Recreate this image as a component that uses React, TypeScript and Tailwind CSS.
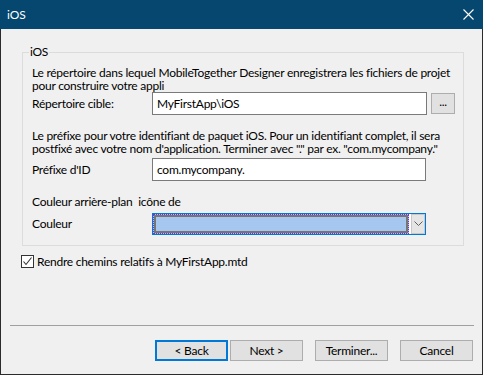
import React from "react";

const font = { fontFamily: 'Lato, "Noto Sans", "Liberation Sans", sans-serif', letterSpacing: "-0.25px" };

function Btn({ children, primary, className = "" }: { children: React.ReactNode; primary?: boolean; className?: string }) {
  return (
    <div
      className={
        "w-[73px] h-[21px] flex items-center justify-center text-[12px] text-black bg-[#e1e1e1] " +
        (primary ? "border-2 border-[#0078d7] " : "border border-[#adadad] ") +
        className
      }
    >
      {children}
    </div>
  );
}

export default function App() {
  return (
    <div className="w-[483px] h-[375px] bg-[#f0f0f0] border-x border-b border-[#2b2b2b] flex flex-col text-black whitespace-nowrap" style={font}>
      <div className="h-[29px] bg-[#05476f] flex items-center justify-between pl-[7px] pr-[8px] shrink-0 -mx-px">
        <span className="text-white text-[12px] tracking-normal">iOS</span>
        <svg width="11" height="11" viewBox="0 0 11 11" className="mr-[1px]">
          <path d="M0.5 0.5 L10.5 10.5 M10.5 0.5 L0.5 10.5" stroke="#ffffff" strokeWidth="1.1" />
        </svg>
      </div>
      <div className="relative ml-[21px] mt-[23px] w-[442px] h-[194px] border border-[#dcdcdc] shrink-0">
        <span className="absolute -top-[9px] left-[6px] px-px bg-[#f0f0f0] text-[12px] leading-[15px]">iOS</span>
        <div className="pl-[9px] pt-[13px] text-[12px]">
          <div className="leading-[13px]">
            Le répertoire dans lequel MobileTogether Designer enregistrera les fichiers de projet
            <br />
            pour construire votre appli
          </div>
          <div className="flex items-center h-[23px] mt-0">
            <span className="w-[120px]">Répertoire cible:</span>
            <div className="w-[275px] h-[23px] bg-white border border-[#7a7a7a] flex items-center pl-[4px]">MyFirstApp\iOS</div>
            <div className="ml-[4px] w-[24px] h-[21px] bg-[#e1e1e1] border border-[#adadad] flex items-center justify-center leading-none pb-[3px]">...</div>
          </div>
          <div className="leading-[13px] mt-[14px]">
            Le préfixe pour votre identifiant de paquet iOS. Pour un identifiant complet, il sera
            <br />
            postfixé avec votre nom d'application. Terminer avec "." par ex. "com.mycompany."
          </div>
          <div className="flex items-center h-[23px] mt-[3px]">
            <span className="w-[120px]">Préfixe d'ID</span>
            <div className="w-[274px] h-[23px] bg-white border border-[#7a7a7a] flex items-center pl-[4px]">com.mycompany.</div>
          </div>
          <div className="leading-[13px] mt-[14px]">Couleur arrière-plan&nbsp; icône de</div>
          <div className="flex items-center h-[22px] mt-[5px]">
            <span className="w-[120px]">Couleur</span>
            <div className="w-[274px] h-[22px] border border-[#0078d7] flex bg-[#a6c8f0]">
              <div className="w-[256px] h-[20px] border border-dotted border-[#7b2fd1] bg-[#a6c8f0]">
                <div className="w-[254px] h-[18px] bg-[#a6c8f0] border-2 border-[#767676]" />
              </div>
              <div className="w-[16px] h-[20px] bg-white flex justify-end">
                <div className="w-[14px] h-[20px] bg-[#e5e5e5] border border-[#c8c8c8] flex items-center justify-center">
                  <svg width="9" height="6" viewBox="0 0 9 6">
                    <path d="M0.5 0.5 L4.5 4.5 L8.5 0.5" stroke="#606060" strokeWidth="1" fill="none" />
                  </svg>
                </div>
              </div>
            </div>
          </div>
        </div>
      </div>
      <div className="flex items-center ml-[20px] mt-[8px] text-[12px] leading-[15px]">
        <div className="w-[13px] h-[13px] border border-[#333333] bg-white flex items-center justify-center">
          <svg width="11" height="11" viewBox="0 0 11 11">
            <path d="M1.5 5.5 L4 8.5 L9.5 1.5" stroke="#333333" strokeWidth="1.1" fill="none" />
          </svg>
        </div>
        <span className="ml-[3px]">Rendre chemins relatifs à MyFirstApp.mtd</span>
      </div>
      <div className="mt-auto">
        <div className="ml-[9px] w-[464px] h-px bg-[#a0a0a0]" />
        <div className="flex justify-end items-center pr-[9px] mt-[14px] mb-[13px]">
          <Btn primary>&lt; Back</Btn>
          <Btn className="ml-[2px]">Next &gt;</Btn>
          <Btn className="ml-[12px]">Terminer...</Btn>
          <Btn className="ml-[12px]">Cancel</Btn>
        </div>
      </div>
    </div>
  );
}
